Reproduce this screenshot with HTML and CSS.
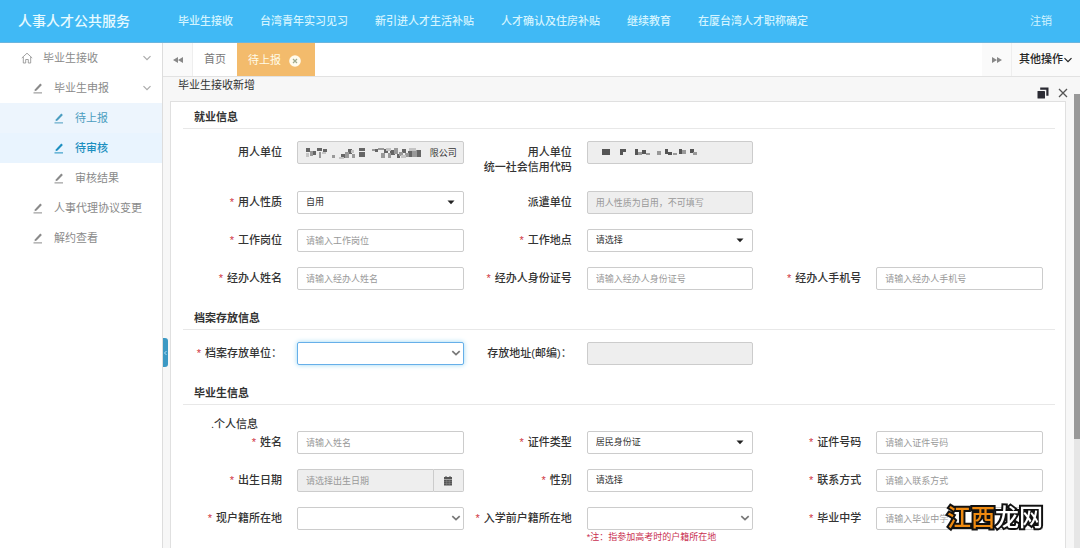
FILE: index.html
```html
<!DOCTYPE html>
<html lang="zh-CN">
<head>
<meta charset="utf-8">
<meta name="viewport" content="width=device-width, initial-scale=1">
<title>人事人才公共服务</title>
<link rel="stylesheet" href="styles.css">
</head>
<body>
<svg class="defs" aria-hidden="true">
  <symbol id="pencil" viewBox="0 0 12 12"><path d="M3 7.2 8.3 1.6 9.9 3 4.6 8.600 2.500 9.200z" fill="currentColor"/><path d="M1.500 10.900H10" stroke="currentColor" stroke-width="1" fill="none"/></symbol>
  <symbol id="chevron" viewBox="0 0 10 10"><path d="M1.500 3.200 5 6.700 8.500 3.200" fill="none" stroke="currentColor" stroke-width="1.200"/></symbol>
  <symbol id="picker" viewBox="0 0 10 10"><path d="M1.300 3.200 5 6.600 8.700 3.200" fill="none" stroke="currentColor" stroke-width="1.700"/></symbol>
  <symbol id="caret" viewBox="0 0 10 10"><path d="M1.500 3.500H8.500L5 7.200z" fill="currentColor"/></symbol>
</svg>
<header class="header">
  <h1 class="brand">人事人才公共服务</h1>
  <nav class="nav">
    <a href="#">毕业生接收</a>
    <a href="#">台湾青年实习见习</a>
    <a href="#">新引进人才生活补贴</a>
    <a href="#">人才确认及住房补贴</a>
    <a href="#">继续教育</a>
    <a href="#">在厦台湾人才职称确定</a>
  </nav>
  <a class="logout" href="#">注销</a>
</header>
<div class="body">
  <aside class="sidebar">
    <a class="item level-1" href="#"><svg class="icon" viewBox="0 0 12 12"><path d="M.8 6 6 1.200 11.200 6M2.300 5V11H4.700V7.500H7.300V11H9.700V5" fill="none" stroke="currentColor" stroke-width=".8"/></svg><span>毕业生接收</span><svg class="fold"><use href="#chevron"/></svg></a>
    <a class="item level-2" href="#"><svg class="icon"><use href="#pencil"/></svg><span>毕业生申报</span><svg class="fold"><use href="#chevron"/></svg></a>
    <a class="item level-3 open" href="#"><svg class="icon"><use href="#pencil"/></svg><span>待上报</span></a>
    <a class="item level-3 current" href="#"><svg class="icon"><use href="#pencil"/></svg><span>待审核</span></a>
    <a class="item level-3" href="#"><svg class="icon"><use href="#pencil"/></svg><span>审核结果</span></a>
    <a class="item level-2" href="#"><svg class="icon"><use href="#pencil"/></svg><span>人事代理协议变更</span></a>
    <a class="item level-2" href="#"><svg class="icon"><use href="#pencil"/></svg><span>解约查看</span></a>
  </aside>
  <main class="main">
    <div class="tabs">
      <button class="tab-scroll" type="button" aria-label="向左"><svg class="double" viewBox="0 0 12 8"><path d="M6 1V7L1 4zM11 1V7L6 4z" fill="currentColor"/></svg></button>
      <button class="tab" type="button">首页</button>
      <button class="tab active" type="button">待上报<svg class="tab-close" viewBox="0 0 12 12"><circle cx="6" cy="6" r="5.800" fill="#fffbed"/><path d="M4 4 8 8M8 4 4 8" stroke="#9fa98c" stroke-width="1.200"/></svg></button>
      <button class="tab-scroll right" type="button" aria-label="向右"><svg class="double" viewBox="0 0 12 8"><path d="M1 1V7L6 4zM6 1V7L11 4z" fill="currentColor"/></svg></button>
      <button class="more" type="button">其他操作<svg class="fold"><use href="#chevron"/></svg></button>
    </div>
    <section class="page">
      <h2 class="page-title">毕业生接收新增</h2>
      <div class="window-tools">
        <button type="button" aria-label="还原"><svg viewBox="0 0 12 12"><path d="M3.200.5H11.500V8.800H9.300V2.700H3.200z" fill="#2b2b33"/><rect x=".5" y="4" width="7.500" height="7.500" rx=".6" fill="#2b2b33"/></svg></button>
        <button type="button" aria-label="关闭"><svg viewBox="0 0 12 12"><path d="M2 2 10 10M10 2 2 10" stroke="#555" stroke-width="1.300"/></svg></button>
      </div>
      <div class="scroll-area">
        <form class="panel">
          <h3 class="section-title">就业信息</h3>
          <div class="rows">
            <div class="row tall">
              <div class="field"><label for="unit">用人单位</label><div class="control"><input class="masked" id="unit" value="限公司" disabled><svg class="mosaic" viewBox="0 0 116 12">
                <path d="M0 1h4v4H0zM6 4h4v4H6zM11 1h5v3h-5zM17 2h4v3h-4zM35 7h4v4h-4zM42 2h4v5h-4zM53 1h6v3h-6zM53 5h6v5h-6zM69 2h3v3h-3zM78 2h4v4h-4zM84 3h5v5h-5zM91 7h3v4h-3zM96 2h4v4h-4zM102 4h4v6h-4zM110 3h5v7h-5z" fill="#666"/>
                <path d="M4 4h3v5H4zM13 5h2v6h-2zM26 8h3v3h-3zM39 5h4v6h-4zM46 7h3v4h-3zM66 2h3v2h-3zM72 1h6v2h-6zM75 6h4v5h-4zM82 6h3v5h-3zM88 1h4v6h-4zM93 5h4v4h-4zM99 6h4v4h-4zM106 3h5v7h-5z" fill="#999"/>
                <path d="M0 6h3v4H0zM16 5h4v2h-4zM33 10h5v2h-5zM45 3h3v3h-3zM80 1h5v3h-5zM95 8h5v3h-5zM103 1h7v3h-7z" fill="#c4c4c4"/></svg></div></div>
              <div class="field"><label for="code">用人单位<br>统一社会信用代码</label><div class="control"><input id="code" disabled><svg class="mosaic" viewBox="0 0 116 12">
                <path d="M6 2h8v6H6zM24 2h3v6h-3zM27 2h3v3h-3zM39 2h3v6h-3zM46 3h4v4h-4zM69 2h3v5h-3zM72 5h4v3h-4zM83 2h3v5h-3zM94 2h4v4h-4z" fill="#555"/>
                <path d="M42 5h4v3h-4zM50 6h4v2h-4zM61 4h4v4h-4zM77 6h4v2h-4zM86 3h4v4h-4zM97 5h4v3h-4z" fill="#999"/></svg></div></div>
            </div>
            <div class="row">
              <div class="field"><label for="nature"><i>*</i>用人性质</label><div class="control"><select id="nature"><option>自用</option></select><svg class="arrow"><use href="#caret"/></svg></div></div>
              <div class="field"><label for="dispatch">派遣单位</label><div class="control"><input id="dispatch" placeholder="用人性质为自用，不可填写" disabled></div></div>
            </div>
            <div class="row">
              <div class="field"><label for="post"><i>*</i>工作岗位</label><div class="control"><input id="post" placeholder="请输入工作岗位"></div></div>
              <div class="field"><label for="place"><i>*</i>工作地点</label><div class="control"><select id="place"><option>请选择</option></select><svg class="arrow"><use href="#caret"/></svg></div></div>
            </div>
            <div class="row">
              <div class="field"><label for="agent"><i>*</i>经办人姓名</label><div class="control"><input id="agent" placeholder="请输入经办人姓名"></div></div>
              <div class="field"><label for="agent-id"><i>*</i>经办人身份证号</label><div class="control"><input id="agent-id" placeholder="请输入经办人身份证号"></div></div>
              <div class="field"><label for="agent-tel"><i>*</i>经办人手机号</label><div class="control"><input id="agent-tel" placeholder="请输入经办人手机号"></div></div>
            </div>
          </div>
          <h3 class="section-title">档案存放信息</h3>
          <div class="rows">
            <div class="row">
              <div class="field"><label for="archive"><i>*</i>档案存放单位：</label><div class="control"><select class="focused" id="archive"><option></option></select><svg class="arrow picker"><use href="#picker"/></svg></div></div>
              <div class="field"><label for="address">存放地址(邮编)：</label><div class="control"><input id="address" disabled></div></div>
            </div>
          </div>
          <h3 class="section-title">毕业生信息</h3>
          <h4 class="subtitle">.个人信息</h4>
          <div class="rows person">
            <div class="row">
              <div class="field"><label for="name"><i>*</i>姓名</label><div class="control"><input id="name" placeholder="请输入姓名"></div></div>
              <div class="field"><label for="id-type"><i>*</i>证件类型</label><div class="control"><select id="id-type"><option>居民身份证</option></select><svg class="arrow"><use href="#caret"/></svg></div></div>
              <div class="field"><label for="id-no"><i>*</i>证件号码</label><div class="control"><input id="id-no" placeholder="请输入证件号码"></div></div>
            </div>
            <div class="row">
              <div class="field"><label for="birth"><i>*</i>出生日期</label><div class="control date"><input id="birth" placeholder="请选择出生日期" disabled><button class="calendar" type="button" aria-label="选择日期"><svg viewBox="0 0 10 10"><path d="M1 1H9V3H1zM1 3.600H9V9.500H1z" fill="#555"/><path d="M1 5.600H9M1 7.500H9M3.700 3.600V9.500M6.300 3.600V9.500" stroke="#999" stroke-width=".4"/><path d="M3 0V2M7 0V2" stroke="#555"/></svg></button></div></div>
              <div class="field"><label for="sex"><i>*</i>性别</label><div class="control"><select id="sex"><option>请选择</option></select></div></div>
              <div class="field"><label for="contact"><i>*</i>联系方式</label><div class="control"><input id="contact" placeholder="请输入联系方式"></div></div>
            </div>
            <div class="row">
              <div class="field"><label for="home"><i>*</i>现户籍所在地</label><div class="control"><select id="home"><option></option></select><svg class="arrow picker"><use href="#picker"/></svg></div></div>
              <div class="field"><label for="old-home"><i>*</i>入学前户籍所在地</label><div><div class="control"><select id="old-home"><option></option></select><svg class="arrow picker"><use href="#picker"/></svg></div><p class="tip">*注：指参加高考时的户籍所在地</p></div></div>
              <div class="field"><label for="school"><i>*</i>毕业中学</label><div class="control"><input id="school" placeholder="请输入毕业中学"></div></div>
            </div>
          </div>
        </form>
        <div class="scrollbar"><div class="thumb"></div></div>
      </div>
      <button class="collapse" type="button" aria-label="收起菜单"><svg viewBox="0 0 5 8"><path d="M3.500 2 1.500 4 3.500 6" fill="none" stroke="#bfe6fa" stroke-width=".9"/></svg></button>
    </section>
  </main>
</div>
<div class="watermark"><span>江西</span>龙网</div>
</body>
</html>
```

FILE: styles.css
```css
* { box-sizing: border-box; }
body {
  margin: 0;
  height: 100vh;
  display: flex;
  flex-direction: column;
  overflow: hidden;
  background: #fff;
  color: #333;
  font: 11px/15px "Liberation Sans", "Noto Sans CJK SC", sans-serif;
}
h1, h2, h3, h4, p { margin: 0; font-weight: 400; }
a { color: inherit; text-decoration: none; }
button, input, select { font: inherit; color: inherit; margin: 0; }
button { border: 0; padding: 0; background: none; }
svg { display: block; }
.defs { position: absolute; width: 0; height: 0; }

.header {
  flex: none;
  display: grid;
  grid-template-columns: 160px 1fr auto;
  align-items: center;
  height: 43px;
  padding: 0 28px 0 18px;
  border-bottom: 1px solid #6bb5de;
  background: #40b9f5;
  color: #d3f4ff;
}
.brand { color: #e6faff; font-size: 14px; line-height: 20px; font-weight: 500; white-space: nowrap; }
.nav { display: flex; gap: 27px; font-weight: 500; white-space: nowrap; }

.body { flex: 1; display: flex; min-height: 0; }
.sidebar { flex: none; width: 163px; border-right: 1px solid #ddd; color: #8a8a8a; }
.item { display: flex; align-items: center; height: 30px; padding-right: 10px; }
.item span { flex: 1; }
.icon { width: 12px; height: 12px; margin-right: 10px; }
.level-1 { padding-left: 21px; }
.level-2 { padding-left: 32px; }
.level-3 { padding-left: 53px; }
.item.open { background: #edf5fd; color: #4b9dc0; }
.item.current { background: #e9f4fe; color: #1c8fc0; font-weight: 500; }
.fold { width: 10px; height: 10px; }
.sidebar .fold { color: #aaa; }

.main { flex: 1; display: flex; flex-direction: column; min-width: 0; }
.tabs { flex: none; display: flex; height: 34px; border-bottom: 1px solid #e2e2e2; }
.tab-scroll { display: grid; place-items: center; width: 30px; background: #fafafa; border-right: 1px solid #eee; color: #888; }
.tab-scroll.right { margin-left: auto; }
.double { width: 12px; height: 8px; }
.tab { width: 44px; color: #777; }
.tab.active { display: flex; align-items: center; gap: 8px; width: 78px; padding: 2px 0 0 11px; background: #f3bb6c; color: #fffbe9; }
.tab-close { width: 12px; height: 12px; }
.more { display: flex; align-items: center; justify-content: center; width: 68px; background: #fafafa; color: #222; font-weight: 500; white-space: nowrap; }

.page { position: relative; flex: 1; display: flex; flex-direction: column; min-height: 0; background: #f7f7f7; }
.page-title { flex: none; height: 17px; padding-left: 15px; font-size: 11px; line-height: 16px; }
.window-tools { position: absolute; top: 10px; right: 11px; display: flex; gap: 8px; }
.window-tools svg { width: 12px; height: 12px; }
.scroll-area { flex: 1; display: flex; min-height: 0; gap: 8px; padding-left: 7px; }
.panel {
  flex: 1;
  margin-top: 7px;
  padding: 5px 10px 0 12px;
  border: 1px solid #e0e0e0;
  border-bottom: 0;
  background: #fff;
}
.scrollbar { flex: none; width: 6px; background: #e6e6e6; }
.thumb { height: 76%; background: #999; }
.collapse {
  position: absolute;
  top: 261px;
  left: 0;
  width: 5px;
  height: 29px;
  border-radius: 0 3px 3px 0;
  background: #3c99c4;
}
.collapse svg { width: 5px; height: 8px; }

.section-title { height: 22px; padding: 3px 0 0 11px; border-bottom: 1px solid #e8e8e8; font-size: 11px; line-height: 15px; font-weight: 700; }
.subtitle { padding: 12px 0 0 28px; font-size: 11px; line-height: 14px; font-weight: 500; }
.rows { display: grid; gap: 15px; padding: 12px 0 18px 3px; }
.rows.person { padding-top: 0; }
.row { display: grid; grid-template-columns: repeat(3, 1fr); height: 23px; }
.row.tall { height: 35px; }
.field { display: grid; grid-template-columns: 96px 1fr; gap: 15px; align-items: start; padding-right: 12px; }
.field label { justify-self: end; padding-top: 4px; text-align: right; font-weight: 500; white-space: nowrap; }
.field i { margin-right: 4px; color: #d0343f; font-style: normal; }
.control { position: relative; display: flex; }
.control input, .control select {
  appearance: none;
  width: 100%;
  height: 23px;
  padding: 0 8px;
  border: 1px solid #ccc;
  border-radius: 2px;
  background: #fff;
  color: #333;
  font-size: 9px;
  line-height: 13px;
  outline: 0;
}
.control input:disabled { background: #eee; opacity: 1; }
.control input::placeholder { color: #999; opacity: 1; }
.control input.masked { padding-right: 6px; text-align: right; }
.control select.focused { border-color: #66afe9; box-shadow: 0 0 5px #9bd6f2; }
.arrow { position: absolute; top: 6px; right: 8px; width: 10px; height: 10px; color: #222; pointer-events: none; }
.arrow.picker { right: 3px; color: #777; }
.mosaic { position: absolute; top: 6px; left: 9px; width: 116px; height: 12px; filter: blur(0.4px); }
.date input { flex: 1; min-width: 0; border-radius: 2px 0 0 2px; }
.calendar { flex: none; display: grid; place-items: center; width: 30px; border: 1px solid #ccc; border-left: 0; border-radius: 0 2px 2px 0; background: #eee; }
.calendar svg { width: 10px; height: 10px; }
.tip { padding-top: 1px; color: #c9304f; font-size: 9px; line-height: 13px; white-space: nowrap; }

.watermark {
  position: fixed;
  right: 37px;
  bottom: 12px;
  color: #fff;
  font-size: 24px;
  line-height: 36px;
  font-weight: 500;
  -webkit-text-stroke: 4px #111;
  paint-order: stroke fill;
}
.watermark span { color: #ef8a10; }
```
